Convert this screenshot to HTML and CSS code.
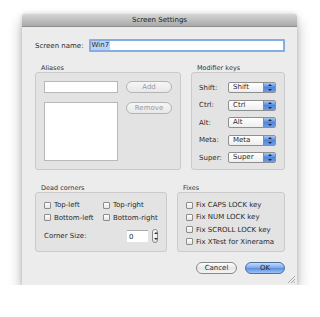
FILE: index.html
```html
<!DOCTYPE html>
<html lang="en">
<head>
  <meta charset="UTF-8">
  <title>Screen Settings</title>
  <link rel="stylesheet" href="styles.css">
</head>
<body>
  <div class="window">
    <div class="titlebar">Screen Settings</div>
    <div class="content">
      <div class="name-row">
        <span class="name-label">Screen name:</span>
        <div class="name-input"><span class="sel">Win7</span></div>
      </div>

      <div class="top-groups">
        <div class="group">
          <div class="group-label">Aliases</div>
          <div class="box aliases">
            <div class="alias-col">
              <div class="field"></div>
              <div class="list"></div>
            </div>
            <div class="alias-col btns">
              <div class="btn disabled">Add</div>
              <div class="btn disabled">Remove</div>
            </div>
          </div>
        </div>
        <div class="group">
          <div class="group-label">Modifier keys</div>
          <div class="box modifiers">
            <div class="mod-row"><span>Shift:</span><div class="select"><span class="select-text">Shift</span><span class="arrows"></span></div></div>
            <div class="mod-row"><span>Ctrl:</span><div class="select"><span class="select-text">Ctrl</span><span class="arrows"></span></div></div>
            <div class="mod-row"><span>Alt:</span><div class="select"><span class="select-text">Alt</span><span class="arrows"></span></div></div>
            <div class="mod-row"><span>Meta:</span><div class="select"><span class="select-text">Meta</span><span class="arrows"></span></div></div>
            <div class="mod-row"><span>Super:</span><div class="select"><span class="select-text">Super</span><span class="arrows"></span></div></div>
          </div>
        </div>
      </div>

      <div class="bottom-groups">
        <div class="group">
          <div class="group-label">Dead corners</div>
          <div class="box corners">
            <div class="corner-grid">
              <label class="check"><span class="box-check"></span>Top-left</label>
              <label class="check"><span class="box-check"></span>Top-right</label>
              <label class="check"><span class="box-check"></span>Bottom-left</label>
              <label class="check"><span class="box-check"></span>Bottom-right</label>
            </div>
            <div class="size-row">
              <span class="size-label">Corner Size:</span>
              <div class="size-input">0</div>
              <div class="stepper"></div>
            </div>
          </div>
        </div>
        <div class="group">
          <div class="group-label">Fixes</div>
          <div class="box fixes">
            <label class="check"><span class="box-check"></span>Fix CAPS LOCK key</label>
            <label class="check"><span class="box-check"></span>Fix NUM LOCK key</label>
            <label class="check"><span class="box-check"></span>Fix SCROLL LOCK key</label>
            <label class="check"><span class="box-check"></span>Fix XTest for Xinerama</label>
          </div>
        </div>
      </div>

      <div class="actions">
        <div class="btn cancel">Cancel</div>
        <div class="btn ok">OK</div>
      </div>
    </div>
    <!-- resize grip -->
    <svg class="grip" viewBox="0 0 8 8" width="8" height="8">
      <line x1="1" y1="8" x2="8" y2="1" stroke="#999" stroke-width="0.8"></line>
      <line x1="4" y1="8" x2="8" y2="4" stroke="#999" stroke-width="0.8"></line>
      <line x1="6.5" y1="8" x2="8" y2="6.5" stroke="#999" stroke-width="0.8"></line>
    </svg>
  </div>
</body>
</html>
```

FILE: styles.css
```css
* {
  box-sizing: border-box;
}
body {
  margin: 0;
  background: #fff;
  font-family: "DejaVu Sans", sans-serif;
  font-size: 7px;
  color: #2a2a2a;
}
.window {
  position: relative;
  margin: 14px 0 0 22px;
  width: 275px;
  height: 271px;
  background: #ececec;
  border-radius: 3px 3px 0 0;
  box-shadow: 0 7px 14px rgba(0, 0, 0, 0.3), 0 0 4px rgba(0, 0, 0, 0.15);
}
.titlebar {
  height: 13px;
  line-height: 13px;
  text-align: center;
  color: #222;
  border-radius: 3px 3px 0 0;
  background: linear-gradient(#d6d6d6, #a9a9a9);
  border-bottom: 1px solid #8e8e8e;
}
.content {
  padding: 12px 12px 0 13px;
  display: flex;
  flex-direction: column;
}
.name-row {
  display: flex;
  align-items: center;
  height: 13px;
  gap: 5px;
}
.name-input {
  flex: 1;
  height: 13px;
  background: #fff;
  border: 2px solid #86ace4;
  border-radius: 1px;
  display: flex;
  align-items: center;
}
.sel {
  background: #b6d3fa;
  padding: 0 1px;
  line-height: 9px;
}

/* group boxes */
.top-groups {
  margin-top: 12px;
  display: grid;
  grid-template-columns: 146px 94px;
  column-gap: 10px;
}
.bottom-groups {
  margin-top: 14px;
  display: grid;
  grid-template-columns: 132px 108px;
  column-gap: 10px;
}
.group-label {
  height: 8px;
  line-height: 8px;
  padding-left: 6px;
  font-size: 6.5px;
  color: #333;
}
.box {
  border: 1px solid #cacaca;
  background: #e3e3e3;
  border-radius: 3px;
}

/* aliases */
.aliases {
  height: 98px;
  padding: 8px;
  display: grid;
  grid-template-columns: 74px 46px;
  column-gap: 8px;
}
.alias-col {
  display: flex;
  flex-direction: column;
  gap: 9px;
}
.field {
  height: 12px;
  background: #fff;
  border: 1px solid #b8b8b8;
}
.list {
  height: 59px;
  background: #fff;
  border: 1px solid #b8b8b8;
}
.btns {
  gap: 9px;
}

/* buttons */
.btn {
  height: 12px;
  line-height: 10px;
  text-align: center;
  border-radius: 6px;
  border: 1px solid #8a8a8a;
  background: linear-gradient(#fff, #e6e6e6 50%, #f4f4f4);
}
.btn.disabled {
  color: #9a9a9a;
  border-color: #b4b4b4;
  background: linear-gradient(#f6f6f6, #e8e8e8);
}
.actions {
  margin-top: 10px;
  display: flex;
  justify-content: flex-end;
  gap: 8px;
}
.cancel {
  width: 41px;
}
.ok {
  width: 40px;
  border-color: #4f6f9f;
  background: linear-gradient(#c4dbf8, #79a7ea 50%, #5d91e2 55%, #9cc3f4);
}

/* modifier keys */
.modifiers {
  height: 98px;
  padding: 9px 8px 0 7px;
  display: flex;
  flex-direction: column;
  gap: 6.6px;
}
.mod-row {
  display: flex;
  justify-content: space-between;
  align-items: center;
  height: 11px;
}
.select {
  width: 48px;
  height: 11px;
  display: flex;
  border: 1px solid #8f8f8f;
  border-radius: 2px;
  background: linear-gradient(#fff, #eee);
  overflow: hidden;
}
.select-text {
  flex: 1;
  padding-left: 4px;
  line-height: 9px;
}
.arrows {
  position: relative;
  width: 12px;
  background: linear-gradient(#a9c7f2, #4f86dc 50%, #6f9de6);
  border-left: 1px solid #6d8fc2;
}
.arrows::before,
.arrows::after {
  content: "";
  position: absolute;
  left: 3.5px;
  border-left: 2px solid transparent;
  border-right: 2px solid transparent;
}
.arrows::before {
  top: 1px;
  border-bottom: 2.5px solid #1b2b48;
}
.arrows::after {
  bottom: 1px;
  border-top: 2.5px solid #1b2b48;
}

/* checkboxes */
.check {
  display: flex;
  align-items: center;
  height: 8px;
  white-space: nowrap;
}
.box-check {
  width: 7px;
  height: 7px;
  margin-right: 3px;
  border: 1px solid #8c8c8c;
  border-radius: 1px;
  background: linear-gradient(#fff, #e4e4e4);
}

/* dead corners */
.corners {
  height: 60px;
  padding: 8px 0 0 8px;
}
.corner-grid {
  display: grid;
  grid-template-columns: 59px auto;
  row-gap: 4.5px;
}
.size-row {
  margin-top: 7px;
  display: flex;
  align-items: center;
}
.size-label {
  width: 83px;
}
.size-input {
  width: 21px;
  height: 12px;
  line-height: 12px;
  padding-left: 2px;
  background: #fff;
  border-top: 1px solid #aaa;
}
.stepper {
  position: relative;
  margin-left: 4px;
  width: 6px;
  height: 14px;
  border: 1px solid #8a8a8a;
  border-radius: 3px;
  background: linear-gradient(#fff, #e6e6e6);
}
.stepper::before,
.stepper::after {
  content: "";
  position: absolute;
  left: 0.5px;
  border-left: 2px solid transparent;
  border-right: 2px solid transparent;
}
.stepper::before {
  top: 2px;
  border-bottom: 2px solid #333;
}
.stepper::after {
  bottom: 2px;
  border-top: 2px solid #333;
}

/* fixes */
.fixes {
  height: 60px;
  padding: 8px 0 0 8px;
  display: flex;
  flex-direction: column;
  gap: 4.3px;
}

.grip {
  position: absolute;
  right: 2px;
  bottom: 2px;
}
```
